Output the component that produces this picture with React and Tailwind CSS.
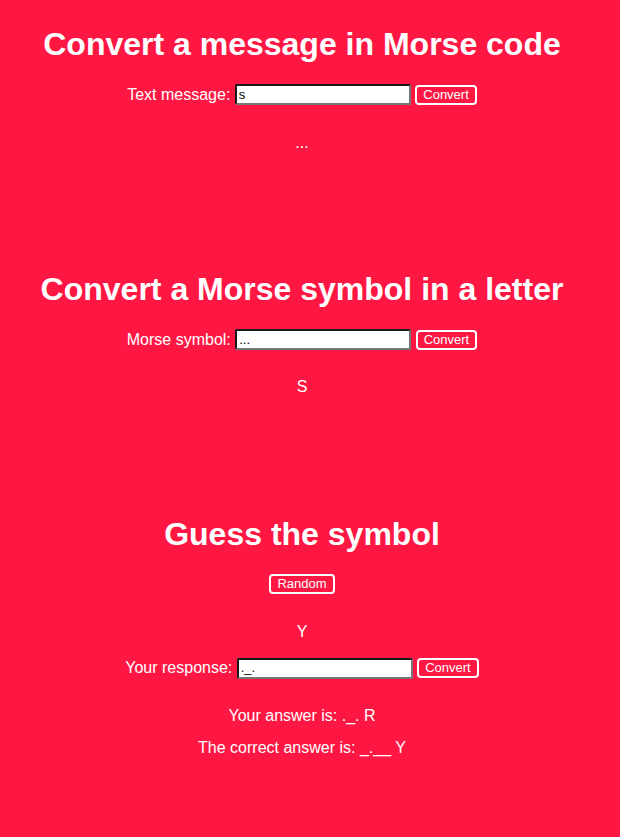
import React from "react";

const font = { fontFamily: '"Liberation Sans", Arial, sans-serif' };

function Btn({ children }) {
  return (
    <button className="inline-block align-middle h-[20px] px-[6px] border-2 border-white rounded-[4px] bg-transparent text-white text-[13px] font-normal leading-[14px]">
      {children}
    </button>
  );
}

function Field({ value }) {
  return (
    <input
      readOnly
      value={value}
      className="inline-block align-middle w-[176px] h-[21px] px-[2px] bg-white text-black text-[13px] border-2 border-t-[#1a1a1a] border-l-[#1a1a1a] border-b-[#767676] border-r-[#767676] rounded-[2px] outline-none"
    />
  );
}

export default function App() {
  return (
    <div className="min-h-[837px] w-full bg-[#ff1744]" style={font}>
      <div className="w-[604px] text-white text-center flex flex-col items-center">
        <h1 className="mt-[26px] text-[32px] font-bold leading-[36px]">
          Convert a message in Morse code
        </h1>
        <div className="mt-[21px] leading-[22px] text-[16px] whitespace-nowrap">
          <span className="align-middle">Text message:</span>{" "}
          <Field value="s" /> <Btn>Convert</Btn>
        </div>
        <div className="mt-[28px] text-[16px] leading-[18px]">...</div>

        <h1 className="mt-[119px] text-[32px] font-bold leading-[36px]">
          Convert a Morse symbol in a letter
        </h1>
        <div className="mt-[21px] leading-[22px] text-[16px] whitespace-nowrap">
          <span className="align-middle">Morse symbol:</span>{" "}
          <Field value="..." /> <Btn>Convert</Btn>
        </div>
        <div className="mt-[27px] text-[16px] leading-[18px]">S</div>

        <h1 className="mt-[120px] text-[32px] font-bold leading-[36px]">
          Guess the symbol
        </h1>
        <div className="mt-[22px] leading-[20px]">
          <Btn>Random</Btn>
        </div>
        <div className="mt-[29px] text-[16px] leading-[18px]">Y</div>
        <div className="mt-[15px] leading-[22px] text-[16px] whitespace-nowrap">
          <span className="align-middle">Your response:</span>{" "}
          <Field value="._." /> <Btn>Convert</Btn>
        </div>
        <div className="mt-[28px] text-[16px] leading-[18px]">Your answer is: ._. R</div>
        <div className="mt-[14px] text-[16px] leading-[18px]">The correct answer is: _.__ Y</div>
      </div>
    </div>
  );
}
